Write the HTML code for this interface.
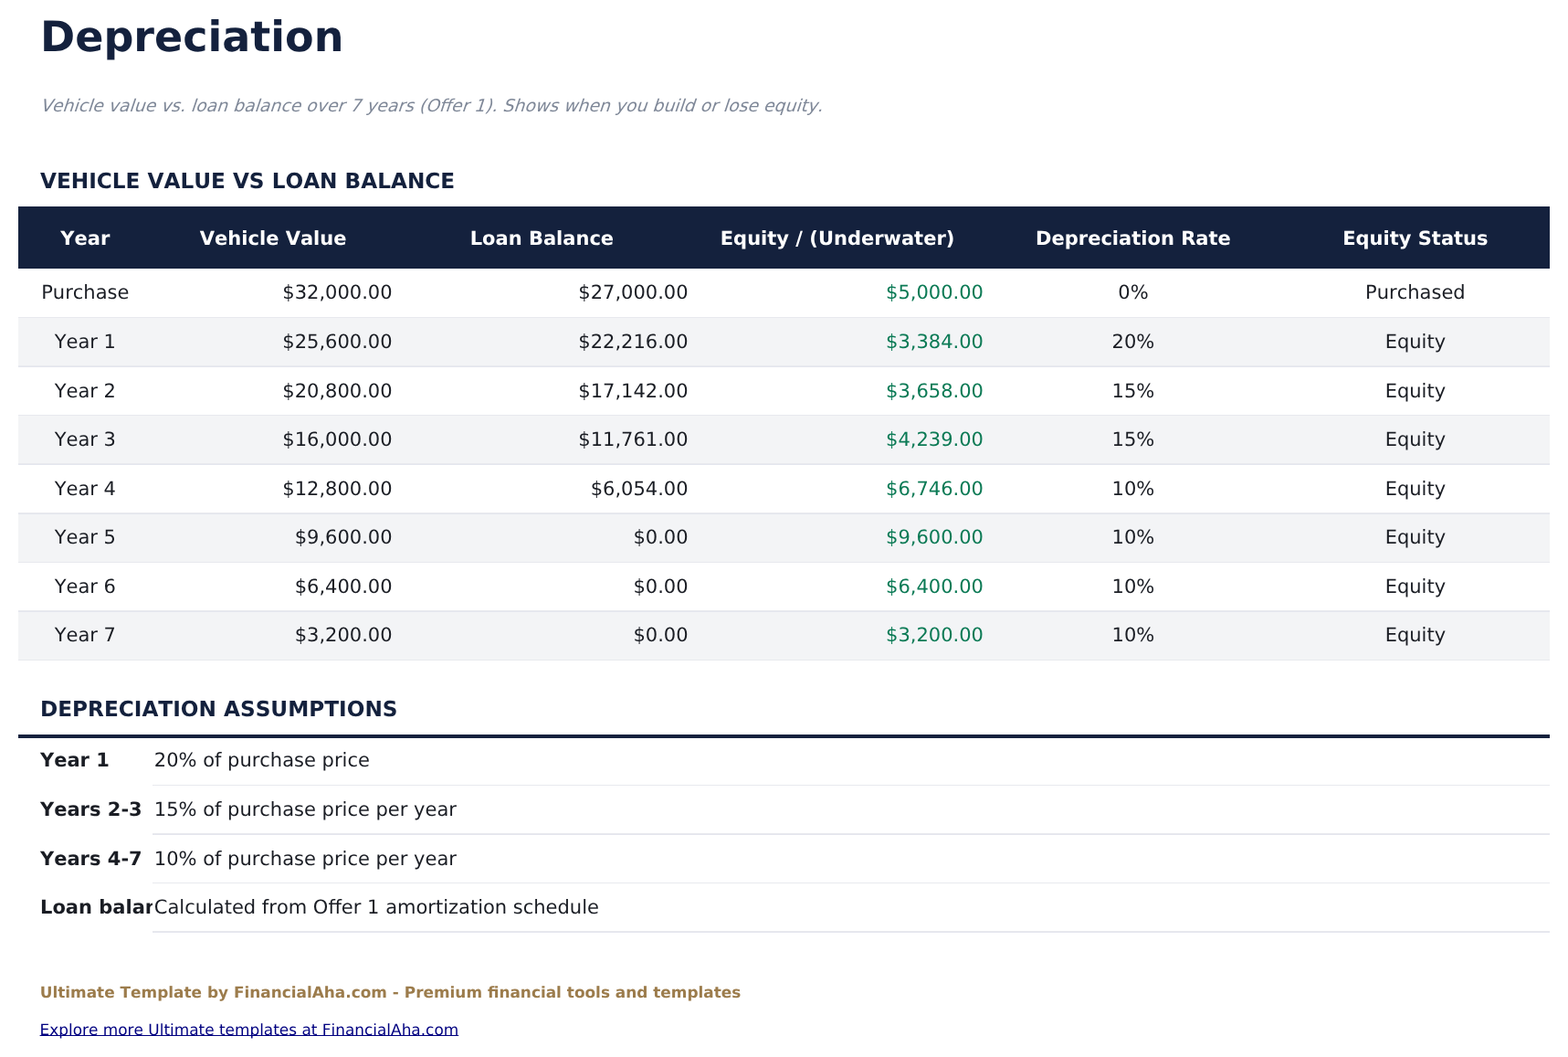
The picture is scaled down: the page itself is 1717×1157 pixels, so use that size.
<!DOCTYPE html>
<html lang="en">
<head>
<meta charset="utf-8">
<title>Depreciation</title>
<style>
html,body{margin:0;padding:0;background:#fff;}
body{width:1717px;height:1157px;overflow:hidden;position:relative;font-family:"DejaVu Sans","Liberation Sans",sans-serif;color:#1a1d24;font-size:21px;font-kerning:none;text-rendering:geometricPrecision;}
#page{position:absolute;left:0;top:0;width:1717px;height:1157px;will-change:transform;}
#bg{position:absolute;left:0;top:0;}
h1,h2,p{margin:0;position:absolute;white-space:nowrap;}
h1{left:44px;top:17px;font-size:46px;font-weight:bold;color:#14213d;line-height:46px;}
.sub{left:43px;top:106px;text-indent:0.3px;font-size:18.82px;color:#7f8898;line-height:21px;transform:skewX(-18.4deg);transform-origin:0 17px;}
h2{left:44px;font-size:23.2px;font-weight:bold;color:#14213d;line-height:26px;}
table{position:absolute;left:20px;border-collapse:collapse;table-layout:fixed;width:1677px;border-spacing:0;}
th,td{padding:0;white-space:nowrap;font-size:21px;}
#t1{top:226px;}
#t1 th{color:#fff;font-weight:bold;height:68px;text-align:center;}
#t1 th span{position:relative;top:1px;}
#t1 td{height:52.97px;padding-bottom:0.6px;text-align:right;}
#t1 td span{position:relative;}
#t1 td.c{text-align:center;}
#t1 td.g{color:#0b7a55;}
#t2{top:806.0px;}
#t2 td{height:53.57px;text-align:left;}

#t2 td span{position:relative;}
#t2 td.l{font-weight:bold;padding-left:24px;overflow:hidden;}
#t2 td.v{padding-left:2.2px;}
.f1{left:43.7px;top:1076px;font-size:16.92px;font-weight:bold;color:#9c7c4c;line-height:20px;}
.f2{left:43.6px;top:1117px;font-size:16.92px;line-height:20px;}
.f2 a{color:#000080;text-decoration:underline;text-decoration-thickness:1px;text-decoration-skip-ink:none;text-underline-offset:0px;}
#t2 tr:nth-child(1) span{top:-1px;}
#t1 td:nth-child(2){padding-right:2.2px;}
#t1 td:nth-child(3){padding-right:1.4px;}
#t1 td:nth-child(4){padding-right:2.2px;}
</style>
</head>
<body>
<div id="page">
<svg id="bg" width="1717" height="1157" viewBox="0 0 1717 1157" aria-hidden="true">
<rect x="20" y="226" width="1677" height="68" fill="#14213d"/>
<rect x="20" y="348" width="1677" height="53" fill="#f3f4f6"/>
<rect x="20" y="455" width="1677" height="53" fill="#f3f4f6"/>
<rect x="20" y="562" width="1677" height="54" fill="#f3f4f6"/>
<rect x="20" y="669" width="1677" height="54" fill="#f3f4f6"/>
<rect x="20" y="347" width="1677" height="1" fill="#e8e9ee"/>
<rect x="20" y="401" width="1677" height="1" fill="#e4e6ee"/>
<rect x="20" y="400" width="1677" height="1" fill="#e8e9ee"/>
<rect x="20" y="454" width="1677" height="1" fill="#e8e9ee"/>
<rect x="20" y="508" width="1677" height="1" fill="#e4e6ee"/>
<rect x="20" y="507" width="1677" height="1" fill="#e8e9ee"/>
<rect x="20" y="562" width="1677" height="1" fill="#e4e6ee"/>
<rect x="20" y="561" width="1677" height="1" fill="#e8e9ee"/>
<rect x="20" y="615" width="1677" height="1" fill="#e8e9ee"/>
<rect x="20" y="669" width="1677" height="1" fill="#e4e6ee"/>
<rect x="20" y="668" width="1677" height="1" fill="#e8e9ee"/>
<rect x="20" y="722" width="1677" height="1" fill="#e8e9ee"/>
<rect x="20" y="804" width="1677" height="4" fill="#14213d"/>
<rect x="167" y="859" width="1530" height="1" fill="#e8e9ee"/>
<rect x="167" y="913" width="1530" height="1" fill="#e4e6ee"/>
<rect x="167" y="912" width="1530" height="1" fill="#e8e9ee"/>
<rect x="167" y="966" width="1530" height="1" fill="#e8e9ee"/>
<rect x="167" y="1020" width="1530" height="1" fill="#e4e6ee"/>
<rect x="167" y="1019" width="1530" height="1" fill="#e8e9ee"/>
</svg>
<h1>Depreciation</h1>
<p class="sub">Vehicle value vs. loan balance over 7 years (Offer 1). Shows when you build or lose equity.</p>
<h2 style="top:186px">VEHICLE VALUE VS LOAN BALANCE</h2>
<table id="t1">
<colgroup><col style="width:146.6px"><col style="width:265.2px"><col style="width:323.2px"><col style="width:324.2px"><col style="width:323.6px"><col style="width:294.2px"></colgroup>
<thead><tr><th><span>Year</span></th><th><span>Vehicle Value</span></th><th><span>Loan Balance</span></th><th><span>Equity / (Underwater)</span></th><th><span>Depreciation Rate</span></th><th><span>Equity Status</span></th></tr></thead>
<tbody>
<tr><td class="c"><span>Purchase</span></td><td><span>$32,000.00</span></td><td><span>$27,000.00</span></td><td class="g"><span>$5,000.00</span></td><td class="c"><span>0%</span></td><td class="c"><span>Purchased</span></td></tr>
<tr><td class="c"><span>Year 1</span></td><td><span>$25,600.00</span></td><td><span>$22,216.00</span></td><td class="g"><span>$3,384.00</span></td><td class="c"><span>20%</span></td><td class="c"><span>Equity</span></td></tr>
<tr><td class="c"><span>Year 2</span></td><td><span>$20,800.00</span></td><td><span>$17,142.00</span></td><td class="g"><span>$3,658.00</span></td><td class="c"><span>15%</span></td><td class="c"><span>Equity</span></td></tr>
<tr><td class="c"><span>Year 3</span></td><td><span>$16,000.00</span></td><td><span>$11,761.00</span></td><td class="g"><span>$4,239.00</span></td><td class="c"><span>15%</span></td><td class="c"><span>Equity</span></td></tr>
<tr><td class="c"><span>Year 4</span></td><td><span>$12,800.00</span></td><td><span>$6,054.00</span></td><td class="g"><span>$6,746.00</span></td><td class="c"><span>10%</span></td><td class="c"><span>Equity</span></td></tr>
<tr><td class="c"><span>Year 5</span></td><td><span>$9,600.00</span></td><td><span>$0.00</span></td><td class="g"><span>$9,600.00</span></td><td class="c"><span>10%</span></td><td class="c"><span>Equity</span></td></tr>
<tr><td class="c"><span>Year 6</span></td><td><span>$6,400.00</span></td><td><span>$0.00</span></td><td class="g"><span>$6,400.00</span></td><td class="c"><span>10%</span></td><td class="c"><span>Equity</span></td></tr>
<tr><td class="c"><span>Year 7</span></td><td><span>$3,200.00</span></td><td><span>$0.00</span></td><td class="g"><span>$3,200.00</span></td><td class="c"><span>10%</span></td><td class="c"><span>Equity</span></td></tr>
</tbody></table>
<h2 style="top:764px">DEPRECIATION ASSUMPTIONS</h2>
<table id="t2">
<colgroup><col style="width:146.6px"><col style="width:1530.4px"></colgroup>
<tbody>
<tr><td class="l"><span>Year 1</span></td><td class="v"><span>20% of purchase price</span></td></tr>
<tr><td class="l"><span>Years 2-3</span></td><td class="v"><span>15% of purchase price per year</span></td></tr>
<tr><td class="l"><span>Years 4-7</span></td><td class="v"><span>10% of purchase price per year</span></td></tr>
<tr><td class="l"><span>Loan balance</span></td><td class="v"><span>Calculated from Offer 1 amortization schedule</span></td></tr>
</tbody></table>
<p class="f1">Ultimate Template by FinancialAha.com - Premium financial tools and templates</p>
<p class="f2"><a>Explore more Ultimate templates at FinancialAha.com</a></p>
</div>
</body>
</html>
